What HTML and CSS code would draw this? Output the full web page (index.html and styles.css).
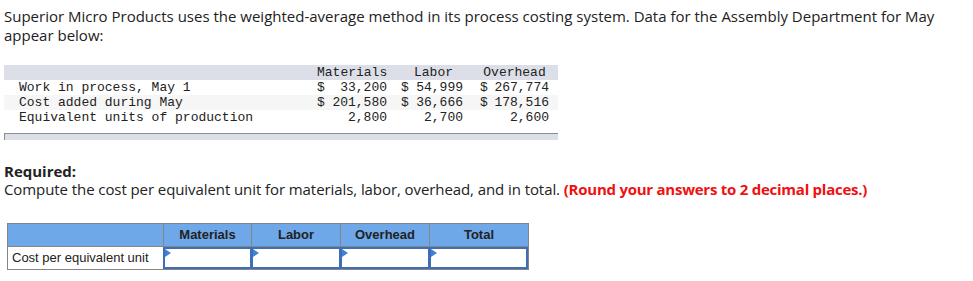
FILE: index.html
```html
<!DOCTYPE html>
<html>
<head>
<meta charset="utf-8">
<link rel="stylesheet" href="styles.css">
</head>
<body>
<div class="page">
  <p class="intro">Superior Micro Products uses the weighted-average method in its process costing system. Data for the Assembly Department for May appear below:</p>

  <div class="data">
    <div class="drow head">
      <div class="c lab"></div>
      <div class="c m ctr">Materials</div>
      <div class="c l ctr">Labor</div>
      <div class="c o ctr">Overhead</div>
    </div>
    <div class="drow">
      <div class="c lab">Work in process, May 1</div>
      <div class="c m money"><span>$</span><span>33,200</span></div>
      <div class="c l money"><span>$</span><span>54,999</span></div>
      <div class="c o money"><span>$</span><span>267,774</span></div>
    </div>
    <div class="drow alt">
      <div class="c lab">Cost added during May</div>
      <div class="c m money"><span>$</span><span>201,580</span></div>
      <div class="c l money"><span>$</span><span>36,666</span></div>
      <div class="c o money"><span>$</span><span>178,516</span></div>
    </div>
    <div class="drow">
      <div class="c lab">Equivalent units of production</div>
      <div class="c m">2,800</div>
      <div class="c l">2,700</div>
      <div class="c o">2,600</div>
    </div>
    <div class="footbar"></div>
  </div>

  <div class="required">
    <div class="req-title">Required:</div>
    <div class="req-text">Compute the cost per equivalent unit for materials, labor, overhead, and in total. <span class="red">(Round your answers to 2 decimal places.)</span></div>
  </div>

  <div class="answer">
    <div class="arow ahead">
      <div class="ac first"></div>
      <div class="ac">Materials</div>
      <div class="ac">Labor</div>
      <div class="ac">Overhead</div>
      <div class="ac last">Total</div>
    </div>
    <div class="arow abody">
      <div class="ac first label">Cost per equivalent unit</div>
      <div class="ac inp"><span class="tri"></span></div>
      <div class="ac inp"><span class="tri"></span></div>
      <div class="ac inp"><span class="tri"></span></div>
      <div class="ac inp last"><span class="tri"></span></div>
    </div>
  </div>
</div>
</body>
</html>
```

FILE: styles.css
```css
* { box-sizing: border-box; }
html, body { margin: 0; padding: 0; background: #fff; }
.page {
  padding: 7px 4px 0 4px;
  font-family: "Open Sans", "Liberation Sans", sans-serif;
  color: #222;
}
.intro {
  margin: 0;
  font-size: 15px;
  line-height: 19px;
  width: 950px;
}
.data {
  margin-top: 20px;
  width: 554px;
  font-family: "Liberation Mono", monospace;
  font-size: 13px;
  color: #222;
}
.drow {
  display: grid;
  grid-template-columns: 313px 70px 76px 86px;
  height: 15px;
  line-height: 15px;
  white-space: nowrap;
}
.drow.head { background: #dcdfe8; }
.drow.alt { background: #f6f6f6; }
.c { text-align: right; }
.c.lab { text-align: left; padding-left: 15px; }
.c.ctr { text-align: center; }
.c.l { padding-left: 14px; }
.c.o { padding-left: 17px; }
.c.l.ctr { padding-left: 17px; }
.c.money { display: flex; justify-content: space-between; }
.footbar {
  margin-top: 8px;
  height: 7px;
  background: #dcdfe8;
  border-top: 1px solid #8a8d96;
  border-left: 1px solid #8a8d96;
}
.required {
  margin-top: 22px;
  font-size: 15px;
  line-height: 18px;
}
.req-title { font-weight: 700; }
.req-text { letter-spacing: -0.08px; }
.red { color: #ee1111; font-weight: 700; letter-spacing: -0.25px; }
.answer {
  margin-top: 25px;
  margin-left: 3px;
  width: 522px;
  border: 1px solid #858585;
  font-family: "Liberation Sans", Arial, sans-serif;
  font-size: 13px;
  color: #222;
}
.arow {
  display: grid;
  grid-template-columns: 155px 88px 89px 89px 99px;
}
.ahead { background: #6fa8e8; height: 22px; }
.ahead .ac {
  border-left: 1px solid #858585;
  font-weight: 700;
  text-align: center;
  line-height: 22px;
}
.ahead .ac.first { border-left: none; }
.abody { height: 23px; border-top: 1px solid #858585; }
.abody .label { line-height: 22px; padding-left: 4px; }
.ac.inp {
  position: relative;
  border: 2px solid #3d6fb6;
  border-right-width: 1px;
  background: #fff;
}
.ac.inp.last { border-right-width: 2px; }
.tri {
  position: absolute;
  left: 0;
  top: 0;
  width: 0;
  height: 0;
  border-top: 4px solid transparent;
  border-bottom: 4px solid transparent;
  border-left: 6px solid #3f80d8;
}
```
